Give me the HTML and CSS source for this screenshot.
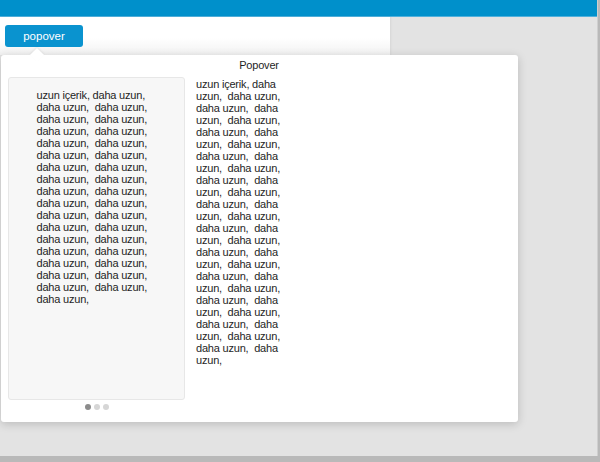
FILE: index.html
```html
<!DOCTYPE html>
<html>
<head>
  <title>Popover</title>
  <link rel="stylesheet" href="styles.css">
</head>
<body>
  <div class="app">
    <div class="topbar"></div>
    <div class="stage">
      <div class="toolbar">
        <button class="btn">popover</button>
      </div>

      <div class="popover">
        <div class="popover-arrow"></div>
        <div class="popover-title">Popover</div>
        <div class="popover-body">
          <div class="slider">
            <div class="slide">
              <div class="slide-text">uzun içerik, daha uzun,  daha uzun,  daha uzun,  daha uzun,  daha uzun,  daha uzun,  daha uzun,  daha uzun,  daha uzun,  daha uzun,  daha uzun,  daha uzun,  daha uzun,  daha uzun,  daha uzun,  daha uzun,  daha uzun,  daha uzun,  daha uzun,  daha uzun,  daha uzun,  daha uzun,  daha uzun,  daha uzun,  daha uzun,  daha uzun,  daha uzun,  daha uzun,  daha uzun,  daha uzun,  daha uzun,  daha uzun,  daha uzun,  daha uzun,</div>
            </div>
            <div class="dots">
              <span class="dot active"></span>
              <span class="dot"></span>
              <span class="dot"></span>
            </div>
          </div>
          <div class="side-text">uzun içerik, daha uzun,  daha uzun,  daha uzun,  daha uzun,  daha uzun,  daha uzun,  daha uzun,  daha uzun,  daha uzun,  daha uzun,  daha uzun,  daha uzun,  daha uzun,  daha uzun,  daha uzun,  daha uzun,  daha uzun,  daha uzun,  daha uzun,  daha uzun,  daha uzun,  daha uzun,  daha uzun,  daha uzun,  daha uzun,  daha uzun,  daha uzun,  daha uzun,  daha uzun,  daha uzun,  daha uzun,  daha uzun,  daha uzun,  daha uzun,</div>
        </div>
      </div>
    </div>
  </div>
</body>
</html>
```

FILE: styles.css
```css
html, body {
  margin: 0;
  height: 100%;
}
body {
  font-family: "Liberation Sans", Arial, Helvetica, sans-serif;
  background: #b9b9b9;
  overflow: hidden;
}
.app {
  width: 597px;
  height: 456px;
  background: #e3e3e3;
  border-right: 1px solid #cfcfcf;
  display: flex;
  flex-direction: column;
}
.topbar {
  height: 16px;
  background: #0090cb;
  border-bottom: 1px solid #4fb0dc;
  flex-shrink: 0;
}
.stage {
  position: relative;
  flex: 1;
}
.toolbar {
  width: 390px;
  height: 38px;
  padding: 8px 5px;
  box-sizing: border-box;
  background: linear-gradient(#ffffff 55%, #f2f2f2);
  box-shadow: 1px 0 2px rgba(0,0,0,0.06);
}
.btn {
  width: 78px;
  height: 22px;
  border: none;
  border-radius: 3px;
  background: #0a93cf;
  color: #fff;
  font-family: inherit;
  font-size: 11.5px;
  padding: 0;
  cursor: pointer;
}
/* popover sits over the stage below the button */
.popover {
  position: absolute;
  top: 38px;
  left: 1px;
  width: 517px;
  height: 367px;
  box-sizing: border-box;
  background: #fff;
  border-radius: 3px;
  box-shadow: 0 2px 10px rgba(0,0,0,0.18);
  padding: 4px 8px 12px 7px;
  display: flex;
  flex-direction: column;
  color: #1e1e1e;
  font-size: 11px;
  letter-spacing: -0.2px;
  line-height: 12px;
}
.popover-arrow {
  position: absolute;
  top: -5px;
  left: 31px;
  width: 10px;
  height: 10px;
  background: #fff;
  transform: rotate(45deg);
  box-shadow: -1px -1px 2px rgba(0,0,0,0.06);
}
.popover-title {
  position: relative;
  text-align: center;
  font-size: 11px;
  margin-bottom: 6px;
}
.popover-body {
  display: flex;
  gap: 11px;
  flex: 1;
}
.slider {
  width: 177px;
  display: flex;
  flex-direction: column;
  gap: 4px;
}
.slide {
  flex: 1;
  background: #f7f7f7;
  border: 1px solid #e7e7e7;
  border-radius: 3px;
  padding-top: 11px;
}
.slide-text {
  width: 120px;
  margin: 0 auto;
  white-space: pre-wrap;
}
.dots {
  display: flex;
  justify-content: center;
  gap: 3px;
}
.dot {
  width: 6px;
  height: 6px;
  border-radius: 50%;
  background: #d6d6d6;
}
.dot.active {
  background: #8c8c8c;
}
.side-text {
  width: 95px;
  margin-top: 1px;
  white-space: pre-wrap;
}
```
